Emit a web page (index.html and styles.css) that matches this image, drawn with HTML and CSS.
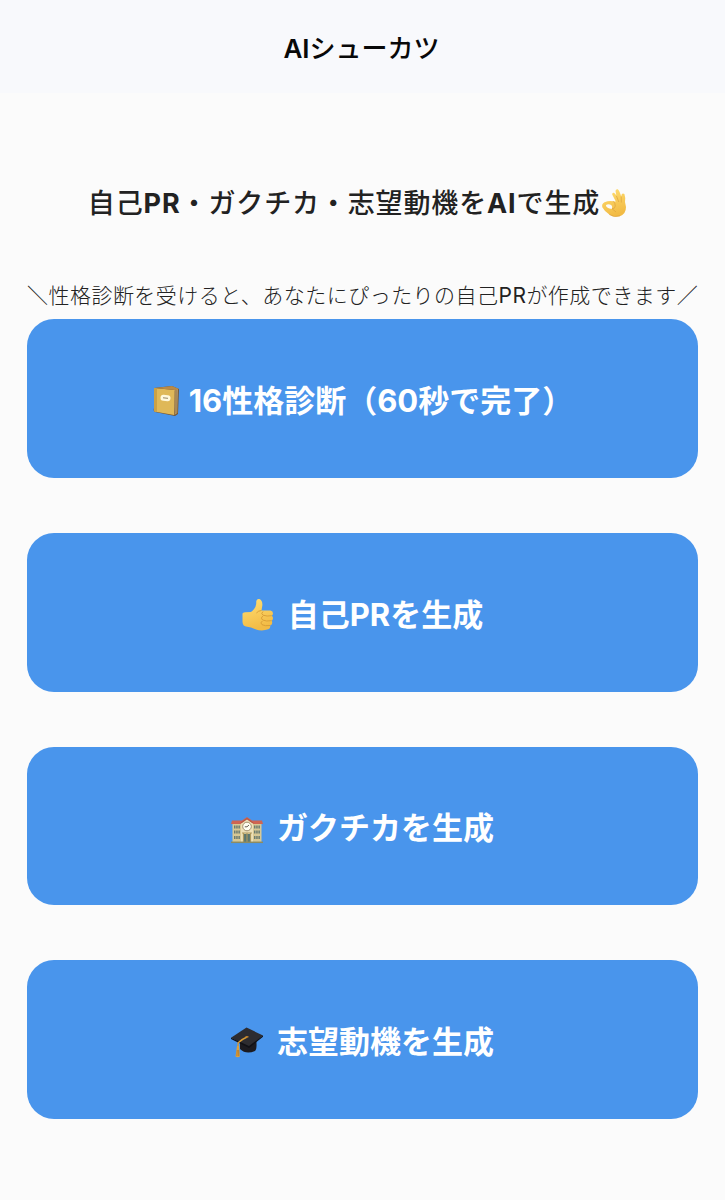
FILE: index.html
```html
<!DOCTYPE html>
<html lang="ja">
<head>
  <meta charset="UTF-8">
  <meta name="viewport" content="width=device-width, initial-scale=1.0">
  <title>AIシューカツ</title>
  <link rel="stylesheet" href="styles.css">
</head>
<body>
  <header class="header">
    <h1><b>AI</b>シューカツ</h1>
  </header>
  <main class="container">
    <h2><span>自己<b>PR</b>・ガクチカ・志望動機を<b>AI</b>で生成</span><svg class="ok-hand" viewBox="0 0 28 30">
      <defs>
        <linearGradient id="skin" x1="0" y1="0" x2="0.3" y2="1">
          <stop offset="0" stop-color="#ffdf73"/>
          <stop offset="1" stop-color="#f2bb45"/>
        </linearGradient>
      </defs>
      <path d="M14.8 13.5 11.2 6.4Q11 4.5 12.8 4.7Q14.2 5.4 15.4 7.8L14.5 3Q14.6 .8 16.8 1.2Q18.5 2.5 20.2 8.5L20.6 6.4Q21.8 4.6 23.4 6Q24.6 9 24 14L25 19Q25 25.5 19.4 28Q13 30 8.3 26.5Q3.5 23.5 1.3 19.3Q.4 16 3.5 14.3Q8 12.3 12 13.2ZM5 17Q4.4 18.4 6.6 19.7Q8.8 21.2 11 20.7Q11.7 18.4 10.2 17Q7.4 15.6 5 17Z" fill="url(#skin)" fill-rule="evenodd"/>
      <path d="M15.4 7.8 17.8 14M20.2 8.5 20.3 14.5M12 13.2Q14.4 14.5 14.3 18Q14 21 11 20.7L15 24M8.3 26.5Q13 29.8 19 27.8" fill="none" stroke="#dca23c" stroke-width=".7"/>
    </svg></h2>
    <p class="lead">＼性格診断を受けると、あなたにぴったりの自己<b>PR</b>が作成できます／</p>
    <div class="menu">
      <button class="diagnosis">
        <svg class="icon book" viewBox="0 0 30 32">
          <path d="M2 3 20 1 27 4 26 29 23 31 3 27Q1 26 2 23Z" fill="#765530"/>
          <path d="M21 5 26 3.7 25.3 28 22.5 30Z" fill="#b59663"/>
          <path d="M22.5 5.5V29M24 5V28" stroke="#87683c" stroke-width=".6"/>
          <path d="M2 3 22.5 5 22 30 2.3 26.4Z" fill="#dfb858"/>
          <path d="M2 3 5 3.3 5 26.9 2.3 26.4Z" fill="#cba145"/>
          <path d="M3 3 20 1 27 4 22.5 5Z" fill="#b88a48"/>
          <rect x="8.5" y="10" width="10" height="6" rx="2.9" fill="#fff8dc" transform="rotate(5 13 13)"/>
          <path d="M11 12.8 16 13.3" stroke="#948563" stroke-width="1"/>
        </svg>
        <span>16性格診断（60秒で完了）</span>
      </button>
      <button>
        <svg class="icon thumb" viewBox="0 0 32 34">
          <path d="M.5 15.5Q.8 14.5 3 14.3L9 14Q13.5 11 14.2 6L14.3 3Q15 .6 17.3 1.1Q20.5 2.5 20.4 7L19.5 12.5H28.5Q31 13.2 31 15.4Q30.8 17 29.7 17.7Q31.8 19 30.5 22L29.6 22.7Q31 24.5 29.3 26.9L28 27.5Q29 29.8 26.3 31.3Q20 33.5 14 31.5Q9 29 4 28.5Q.9 28 .5 24Z" fill="url(#skin)"/>
          <path d="M14.4 15Q16.4 12.6 19.5 12.5M29.7 17.7Q25 18.6 21 17.2M29.6 22.7Q24 23.6 20.6 22M28 27.5Q23 28.3 20 26.7M21 17.2Q18.5 15.5 21 13.5M20.6 22Q18 20 20.8 18M20 26.7Q17.7 25 20.3 23" fill="none" stroke="#d79c34" stroke-width=".9"/>
        </svg>
        <span>自己PRを生成</span>
      </button>
      <button>
        <svg class="icon school" viewBox="0 0 32 32">
          <path d="M1.5 9H30.5V28H1.5Z" fill="#d8c894"/>
          <path d="M1 6.5H11L16 3 21 6.5H31L32 10H0Z" fill="#cf6552"/>
          <path d="M10 9 16 4.8 22 9V28H10Z" fill="#eee0b7"/>
          <path d="M10 9 16 4.8 22 9" fill="none" stroke="#b75543" stroke-width="1.2"/>
          <path d="M3 13H9M3 18H9M3 23.5H9M23 13H29M23 18H29M23 23.5H29" stroke="#6c7c70" stroke-width="3" stroke-dasharray="1.5 .7"/>
          <path d="M12 20H20V28H12Z" fill="#5b7770"/>
          <path d="M11 19H21M12.5 19V28M16 19V28M19.5 19V28" stroke="#ad985e" stroke-width="1.2"/>
          <circle cx="16" cy="12.5" r="4.3" fill="#fffdf0" stroke="#8d7856" stroke-width=".8"/>
          <path d="M16 12.8 18 11M16 12.8H13.8" fill="none" stroke="#554b3e" stroke-width=".9"/>
          <path d="M0 28.3H32" stroke="#8c8b62" stroke-width="1.5"/>
        </svg>
        <span>ガクチカを生成</span>
      </button>
      <button>
        <svg class="icon" viewBox="0 0 32 32">
          <path d="M9 14V23Q15 29 24 25Q26.5 22.5 25 12Z" fill="#1c1b20"/>
          <path d="M0 11.7 15.5 1.5 32 9.5 18 21Z" fill="#2d2c30"/>
          <path d="M0 11.7 18 20 32 9.5V10.8L18 22 0 13Z" fill="#111116"/>
          <path d="M16 11Q11 13.2 7.2 16.7L6.8 22" fill="none" stroke="#d79a35" stroke-width="1.4"/>
          <path d="M6 20H8L8.9 30.5Q6.8 32 4.5 30.5Z" fill="#dda13c"/>
          <path d="M6.3 24 5.9 30M7.6 24 7.7 30" stroke="#a9691e" stroke-width=".6"/>
          <ellipse cx="16" cy="10.8" rx="1.7" ry=".9" fill="#bd812e"/>
        </svg>
        <span>志望動機を生成</span>
      </button>
    </div>
  </main>
</body>
</html>
```

FILE: styles.css
```css
* {
  box-sizing: border-box;
}
body {
  margin: 0;
  min-height: 1200px;
  background: #fbfbfb;
  color: #222;
  font-family: Inter, "Noto Sans CJK JP", sans-serif;
}
.header {
  height: 93px;
  background: #f8f9fc;
  display: flex;
  justify-content: center;
  padding: 29px 2px 0 0;
}
h1 {
  margin: 0;
  font-size: 26px;
  line-height: 40px;
  font-weight: 500;
  color: #080808;
}
h1 b {
  font-weight: 600;
}
.container {
  padding: 87px 27px 0;
}
h2 {
  display: flex;
  justify-content: center;
  align-items: center;
  margin: 0;
  padding-right: 8px;
  height: 42px;
  font-size: 27px;
  font-weight: 500;
  letter-spacing: 0.87px;
  white-space: nowrap;
}
h2 b {
  font-weight: 700;
}
.ok-hand {
  width: 28px;
  height: 30px;
  margin-left: 1px;
  margin-top: 4px;
}
.lead {
  margin: 58px 0 0;
  height: 39px;
  line-height: 32px;
  font-size: 21px;
  font-weight: 300;
  letter-spacing: 0.47px;
  white-space: nowrap;
}
.lead b {
  font-weight: 400;
}
.menu {
  display: flex;
  flex-direction: column;
  gap: 55px;
}
button {
  display: flex;
  justify-content: center;
  align-items: center;
  gap: 14px;
  width: 100%;
  height: 158.8px;
  padding: 0;
  border: none;
  border-radius: 27px;
  background: #4995ec;
  color: #fff;
  font-family: inherit;
  font-size: 31px;
  font-weight: 700;
  white-space: nowrap;
  cursor: pointer;
}
.icon {
  width: 32px;
  height: 32px;
  margin-top: 4px;
}
.thumb {
  height: 34px;
  margin-top: 6px;
}
.school {
  margin-top: 9px;
}
.diagnosis {
  gap: 7px;
}
.book {
  width: 30px;
  margin-top: 5px;
}
```
